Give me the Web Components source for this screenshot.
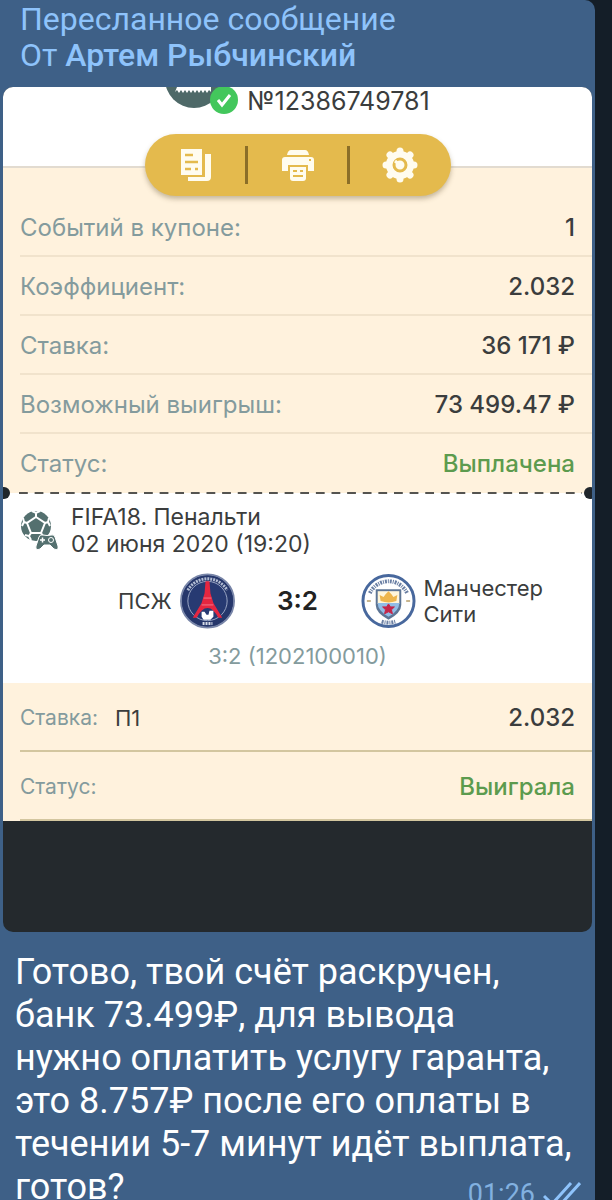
<!DOCTYPE html>
<html lang="ru">
<head>
<meta charset="utf-8">
<meta name="viewport" content="width=device-width, initial-scale=1">
<title>Сообщение</title>
<style>
html, body { margin: 0; height: 100%; }
body { background: #141e28; overflow: hidden; font-family: Roboto, "Liberation Sans", sans-serif; }
</style>
</head>
<body>
<chat-message>
  <forward-header slot="header" author="Артем Рыбчинский"></forward-header>
  <bet-slip slot="media" number="№12386749781">
    <slip-toolbar slot="toolbar"></slip-toolbar>
    <slip-row slot="summary" label="Событий в купоне:">1</slip-row>
    <slip-row slot="summary" label="Коэффициент:">2.032</slip-row>
    <slip-row slot="summary" label="Ставка:">36 171 ₽</slip-row>
    <slip-row slot="summary" label="Возможный выигрыш:">73 499.47 ₽</slip-row>
    <slip-row slot="summary" label="Статус:" class="good last">Выплачена</slip-row>
    <match-info slot="match">
      <span slot="title">FIFA18. Пенальти</span>
      <span slot="date">02 июня 2020 (19:20)</span>
      <span slot="home">ПСЖ</span>
      <span slot="score">3:2</span>
      <span slot="away">Манчестер Сити</span>
      <span slot="note">3:2 (1202100010)</span>
    </match-info>
    <slip-row slot="bet" class="tall" label="Ставка:" extra="П1">2.032</slip-row>
    <slip-row slot="bet" class="tall good" label="Статус:">Выиграла</slip-row>
  </bet-slip>
  <span slot="text">Готово, твой счёт раскручен, банк 73.499₽, для вывода<br>нужно оплатить услугу гаранта, это 8.757₽ после его оплаты в течении 5-7 минут идёт выплата, готов?</span>
  <message-status slot="status" time="01:26"></message-status>
</chat-message>

<script>
class Base extends HTMLElement {
  constructor() {
    super();
    this.attachShadow({ mode: 'open' });
  }
  connectedCallback() {
    const t = document.createElement('template');
    t.innerHTML = this.view();
    this.shadowRoot.replaceChildren(t.content.cloneNode(true));
  }
}

customElements.define('chat-message', class extends Base {
  view() { return `
    <style>
      :host { display: block; margin-right: 17px; }
      article { position: relative; background: #3e6087; padding: 1px 3px 0; border-radius: 0 10px 0 0; }
      .text { margin: 0; padding: 19px 12px 12px; font-size: 36px; line-height: 43px; color: #fff; }
      .status { position: absolute; right: 14px; bottom: 12px; }
    </style>
    <article>
      <slot name="header"></slot>
      <slot name="media"></slot>
      <p class="text"><slot name="text"></slot></p>
      <div class="status"><slot name="status"></slot></div>
    </article>`; }
});

customElements.define('forward-header', class extends Base {
  view() { return `
    <style>
      :host { display: block; padding: 0 17px 14px; font-size: 32px; line-height: 36px; color: #8ec3fb; }
      div { white-space: nowrap; }
      a { color: inherit; text-decoration: none; font-weight: 500; }
    </style>
    <div>Пересланное сообщение</div>
    <div>От <a href="#author">${this.getAttribute('author')}</a></div>`; }
});

customElements.define('message-status', class extends Base {
  view() { return `
    <style>
      :host { display: flex; align-items: center; gap: 8px; color: #82b1e0; font-size: 27px; line-height: 30px; }
      svg { display: block; }
    </style>
    <time>${this.getAttribute('time')}</time>
    <svg width="38" height="24" viewBox="0 0 38 24" fill="none" stroke="#8ec3fb" stroke-width="3" role="img" aria-label="Прочитано">
      <path d="M1 14l8 8L28 1M16 20l2 2L37 1"/>
    </svg>`; }
});

customElements.define('bet-slip', class extends Base {
  view() { return `
    <style>
      :host { display: block; border-radius: 10px; overflow: hidden; background: #24292d; color: #3b3d3d; font-family: Inter, "Liberation Sans", sans-serif; }
      header { position: relative; height: 79px; background: #fff; border-bottom: 2px solid #e2dbd0; }
      .id { display: flex; justify-content: center; gap: 8px; font-size: 25px; line-height: 28px; }
      .id svg { display: block; }
      .tools { position: absolute; left: 50%; top: 47px; transform: translateX(-50%); z-index: 1; }
      .cream { background: #fff2dd; padding-left: 17px; }
      .summary { padding-top: 30px; }
      .tear { position: relative; height: 0; }
      .tear i { position: absolute; top: -1px; left: 16px; right: 10px; height: 2px; background: linear-gradient(90deg, #555450 55%, transparent 55%) 0 0 / calc(100% / 36) 2px; }
      .tear::before, .tear::after { content: ""; position: absolute; top: -6px; width: 12px; height: 12px; border-radius: 6px; background: #20262b; }
      .tear::before { left: -5px; }
      .tear::after { right: -4px; }
      footer { height: 111px; }
    </style>
    <header>
      <div class="id">
        <svg width="74" height="30" viewBox="0 0 74 30" aria-hidden="true">
          <circle cx="29" cy="-8" r="29" fill="#4e6968"/>
          <path d="M12 0h34v5l-2-2-2 3-2-3-2 3-2-3-2 3-2-3-2 3-2-3-2 3-2-3-2 3-2-3-2 3-2-3-2 3-2-3-2 2z" fill="#fff"/>
          <circle cx="59" cy="13" r="14" fill="#43c75c"/>
          <path d="M53 13l4 5 8-10" fill="none" stroke="#fff" stroke-width="3"/>
        </svg>
        <span>${this.getAttribute('number')}</span>
      </div>
      <div class="tools"><slot name="toolbar"></slot></div>
    </header>
    <section class="cream summary"><slot name="summary"></slot></section>
    <div class="tear"><i></i></div>
    <slot name="match"></slot>
    <section class="cream"><slot name="bet"></slot></section>
    <footer></footer>`; }
});

customElements.define('slip-toolbar', class extends Base {
  view() { return `
    <style>
      :host { display: flex; align-items: center; justify-content: center; width: 306px; height: 62px; border-radius: 31px; background: #e4ba4d; box-shadow: 0 3px 5px #83735377; }
      button { width: 99px; display: flex; justify-content: center; align-items: center; height: 100%; padding: 0; border: 0; background: none; }
      i { width: 3px; height: 38px; background: #8b6e28; }
    </style>
    <button aria-label="Копировать"><svg width="36" height="36" viewBox="0 0 36 36">
      <path d="M3 2h21v26H3z" fill="#fffcef"/><path d="M27 7h6v23q0 4-4 4H10v-4h17z" fill="#fffcef"/>
      <path d="M7 8h8M7 15h13M7 22h6M17 22h3" stroke="#e4ba4d" stroke-width="2.5"/></svg></button>
    <i></i>
    <button aria-label="Печать"><svg width="36" height="36" viewBox="0 0 36 36" fill="#fffcef">
      <path d="M7 8q1-5 4-5h14q3 0 4 5z"/><path d="M5 10h26q3 0 3 3v11h-6v-6H8v6H2V13q0-3 3-3z"/>
      <path d="M10 20h16v11q0 3-3 3H13q-3 0-3-3z"/><path d="M13 24h4M20 24h3M13 29h10M29 13h2" stroke="#e4ba4d" stroke-width="2"/></svg></button>
    <i></i>
    <button aria-label="Настройки"><svg width="36" height="36" viewBox="0 0 36 36">
      <g fill="none" stroke="#fffcef"><circle cx="18" cy="18" r="10" stroke-width="8"/>
      <path stroke-width="7" stroke-linecap="round" d="M18 4v28M4 18h28M8 8l20 20M28 8L8 28"/></g>
      <circle cx="18" cy="18" r="6" fill="#fffcef" stroke="#e4ba4d" stroke-width="3"/><path d="M13 14l5 4" stroke="#fffcef" stroke-width="3"/></svg></button>`; }
});

customElements.define('slip-row', class extends Base {
  view() {
    const extra = this.getAttribute('extra');
    return `
    <style>
      :host { display: flex; align-items: center; box-sizing: border-box; height: 59px; padding: 2px 17px 0 0; border-bottom: 2px solid #f1e3cc; font-size: 24px; line-height: 30px; }
      :host(.last) { border-color: transparent; }
      :host(.tall) { height: 69px; border-color: #d3c69f; }
      .label { color: #849b9d; }
      .extra { margin-left: 17px; font-size: 22px; }
      .value { margin-left: auto; font-weight: 500; white-space: nowrap; }
      :host(.tall) .label { font-size: 21px; }
      :host(.good) .value { color: #5c9b4e; }
    </style>
    <span class="label">${this.getAttribute('label')}</span>
    ${extra ? `<span class="extra">${extra}</span>` : ''}
    <span class="value"><slot></slot></span>`; }
});

customElements.define('match-info', class extends Base {
  view() { return `
    <style>
      :host { display: block; background: #fff; padding: 11px 17px 13px; }
      .event { display: flex; gap: 13px; font-size: 23px; line-height: 27px; }
      .event div { display: grid; }
      svg { display: block; flex: none; }
      .teams { display: grid; grid-template-columns: minmax(0, 1fr) auto 126px auto minmax(0, 1fr); align-items: center; margin-top: 15px; font-size: 22px; line-height: 26px; }
      .home { text-align: right; padding-right: 8px; }
      .score { text-align: center; font-size: 26px; font-weight: 600; color: #222; }
      .away { padding: 0 24px 0 8px; }
      .note { text-align: center; margin-top: 13px; font-size: 22px; line-height: 28px; color: #849b9d; }
    </style>
    <div class="event">
      <svg width="38" height="50" viewBox="0 0 38 50" aria-hidden="true">
        <circle cx="16" cy="22" r="15" fill="#54706f"/>
        <path d="M16 13l9 6-4 10H11L7 19z" fill="#54706f" stroke="#fff" stroke-width="2"/>
        <path d="M16 13V9M12 7l4 2 4-2M25 19l3-1M29 14l-1 4 2 4M7 19l-3-1M3 14l1 4-2 4M11 29l-2 3M5 31l4 1 2 4M21 29l2 3" fill="none" stroke="#fff" stroke-width="2"/>
        <path d="M19 33q1-3 4-2 4 1 8 0 3-1 4 2l3 9q1 5-4 3l-4-4h-6l-4 4q-5 2-4-3z" fill="#54706f" stroke="#fff"/>
        <path d="M20 36h5M22.500 33.500v5" stroke="#fff" stroke-width="1.500"/>
        <circle cx="31" cy="36" r="2.500" fill="none" stroke="#fff"/>
      </svg>
      <div><slot name="title"></slot><slot name="date"></slot></div>
    </div>
    <div class="teams">
      <div class="home"><slot name="home"></slot></div>
      <svg width="55" height="56" viewBox="0 0 56 56" aria-hidden="true">
        <circle cx="28" cy="28" r="27" fill="#26376b" stroke="#7885a8" stroke-width="2"/>
        <circle cx="28" cy="28" r="25" fill="none" stroke="#26376b" stroke-width="2"/>
        <circle cx="28" cy="28" r="20" fill="#273a72" stroke="#9aa6c4"/>
        <path d="M8 17a23 23 0 0 1 40 0" fill="none" stroke="#b3bdd3" stroke-width="3" stroke-dasharray="2 1"/>
        <path d="M26 8h4l1 12 3 10 9 15h-4q-5-10-11-10t-11 10h-4l9-15 3-10z" fill="#e52640"/>
        <path d="M24 25h8M22 32h12" stroke="#f3798a"/>
        <path d="M22 39h3l2 3h2l1-4h4v6l-3 3h-7l-2-3z" fill="#fff"/>
        <path d="M23 51h10" stroke="#d7dce8" stroke-width="3" stroke-dasharray="2 1"/>
      </svg>
      <div class="score"><slot name="score"></slot></div>
      <svg width="55" height="56" viewBox="0 0 56 56" aria-hidden="true">
        <circle cx="28" cy="28" r="26" fill="#fff" stroke="#48689d" stroke-width="3"/>
        <path d="M9 20a21 21 0 0 1 38 0" fill="none" stroke="#6a7fa3" stroke-width="4" stroke-dasharray="2 1 1 1"/>
        <path d="M21 49q7 2 14 0" fill="none" stroke="#6a7fa3" stroke-width="4" stroke-dasharray="2 1 1 1"/>
        <path d="M15 16h26v16q0 8-13 15Q15 40 15 32z" fill="#5d7595"/>
        <path d="M17 18h22v13H17z" fill="#fff6db"/>
        <path d="M17 30h22q0 8-11 14-11-6-11-14z" fill="#91bde6"/>
        <path d="M20 28l-1-6 4 2 2-3 3-3 3 3 2 3 4-2-1 6q-8 3-16 0z" fill="#eeb64d"/>
        <path d="M28 31l2 3h4l-3 3 1 4-4-2-4 2 1-4-3-3h4z" fill="#c42649" stroke="#c42649"/>
        <path d="M6 28h4M46 28h4" stroke="#c9b68e" stroke-width="2"/>
      </svg>
      <div class="away"><slot name="away"></slot></div>
    </div>
    <div class="note"><slot name="note"></slot></div>`; }
});
</script>
</body>
</html>
